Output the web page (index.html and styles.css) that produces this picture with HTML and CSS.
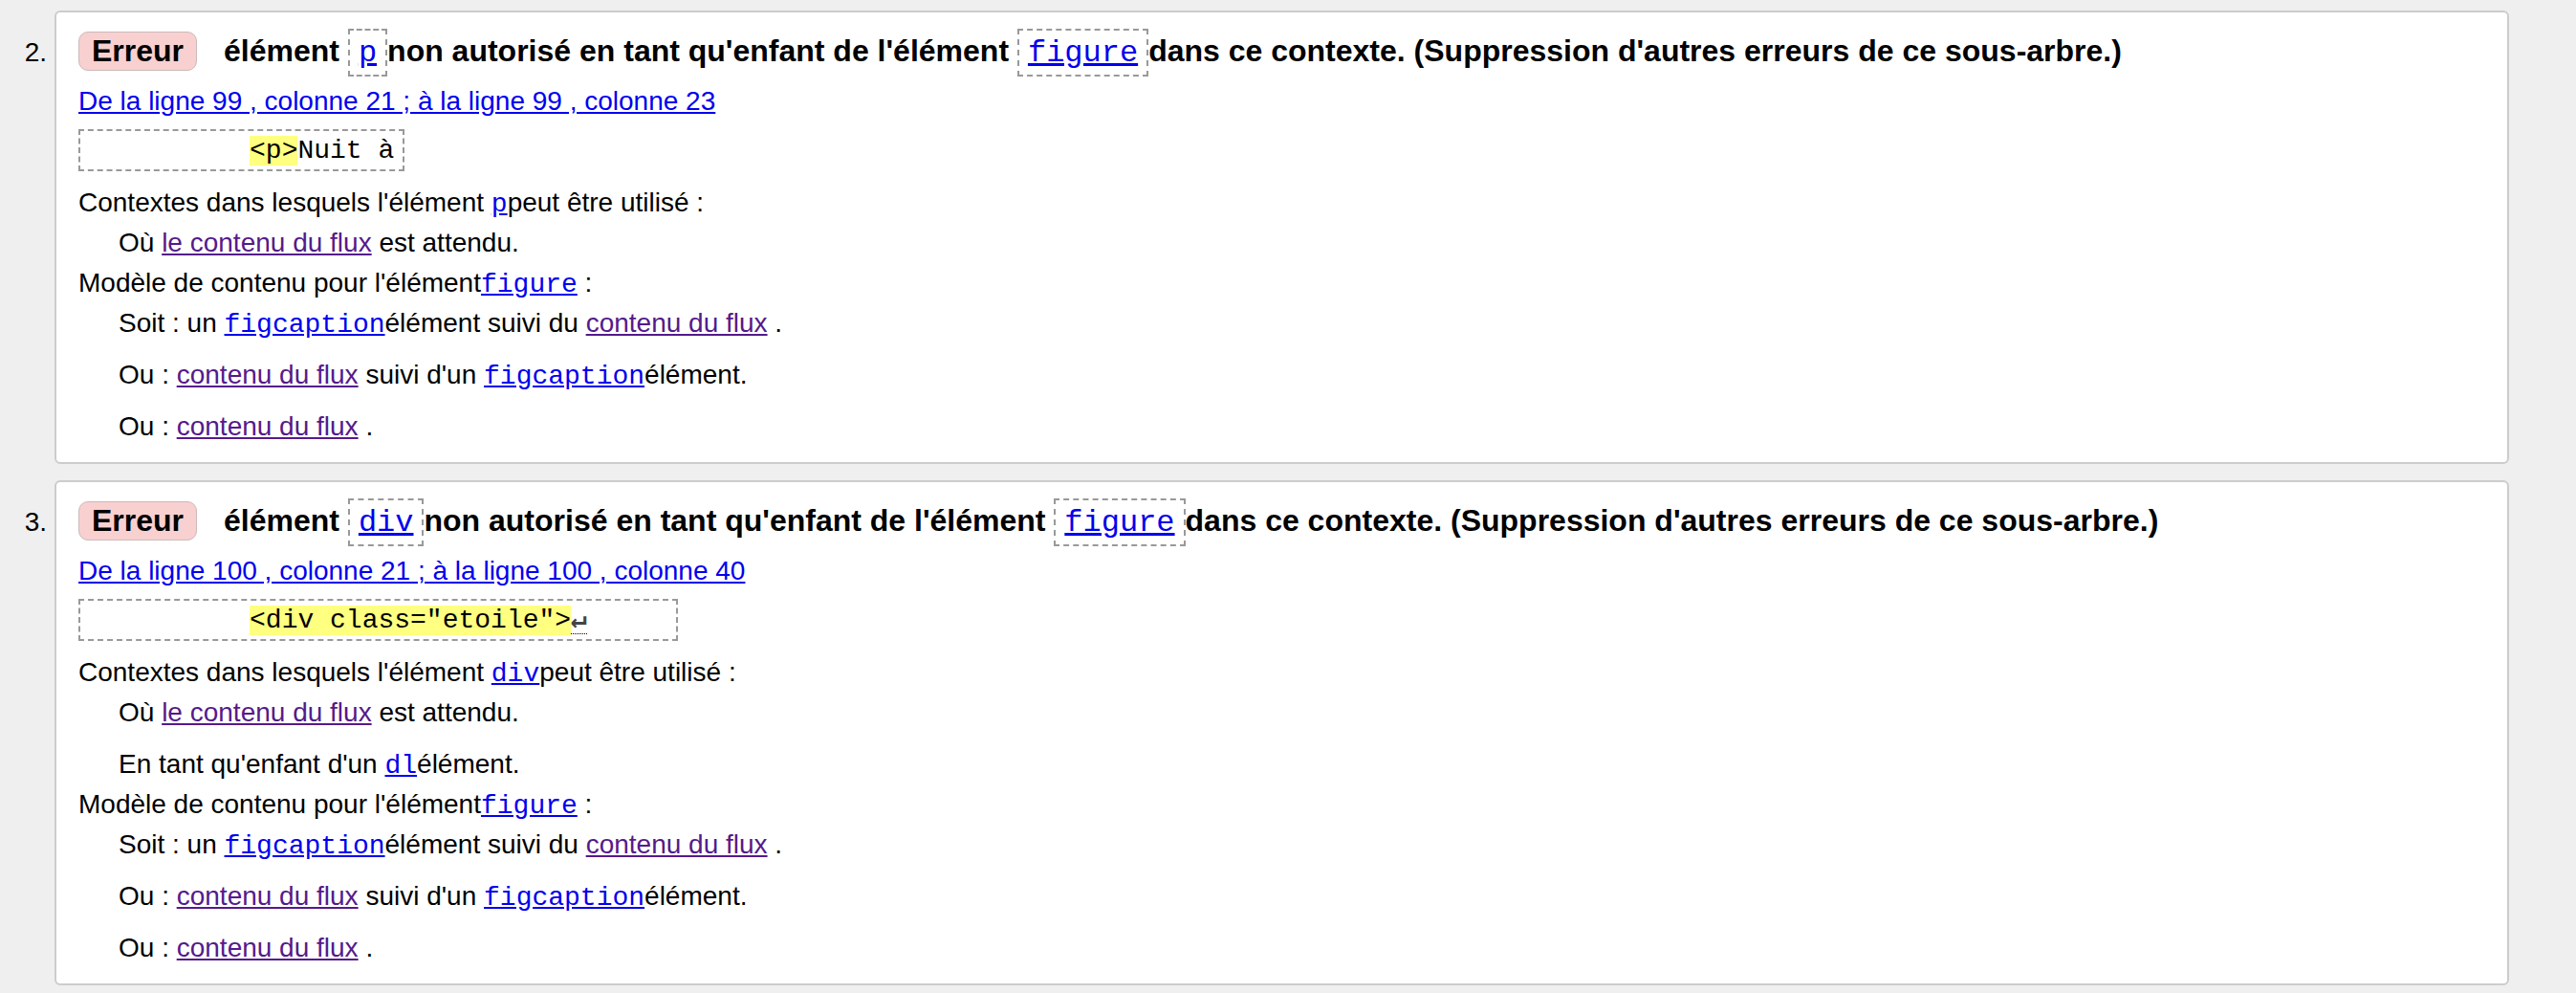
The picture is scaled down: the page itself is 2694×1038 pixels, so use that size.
FILE: index.html
```html
<!DOCTYPE html>
<html lang="fr">
<head>
<meta charset="utf-8">
<title>Résultats de validation</title>
<link rel="stylesheet" href="styles.css">
</head>
<body>
<ol class="messages">
  <li class="msg">
    <span class="num">2.</span>
    <div class="card">
      <p class="title"><strong class="badge">Erreur</strong>élément <code class="tag"><a href="#">p</a></code>non autorisé en tant qu'enfant de l'élément <code class="tag"><a href="#">figure</a></code>dans ce contexte. (Suppression d'autres erreurs de ce sous-arbre.)</p>
      <p class="loc"><a href="#">De la ligne 99 , colonne 21 ; à la ligne 99 , colonne 23</a></p>
      <p class="extract"><code>          <b class="hl">&lt;p&gt;</b>Nuit à</code></p>
      <dl class="ctx">
        <dt>Contextes dans lesquels l'élément <a href="#"><code>p</code></a>peut être utilisé :</dt>
        <dd>Où <a class="v" href="#">le contenu du flux</a> est attendu.</dd>
        <dt>Modèle de contenu pour l'élément<a href="#"><code>figure</code></a> :</dt>
        <dd>Soit : un <a href="#"><code>figcaption</code></a>élément suivi du <a class="v" href="#">contenu du flux</a> .</dd>
        <dd>Ou : <a class="v" href="#">contenu du flux</a> suivi d'un <a href="#"><code>figcaption</code></a>élément.</dd>
        <dd>Ou : <a class="v" href="#">contenu du flux</a> .</dd>
      </dl>
    </div>
  </li>
  <li class="msg">
    <span class="num">3.</span>
    <div class="card">
      <p class="title"><strong class="badge">Erreur</strong>élément <code class="tag"><a href="#">div</a></code>non autorisé en tant qu'enfant de l'élément <code class="tag"><a href="#">figure</a></code>dans ce contexte. (Suppression d'autres erreurs de ce sous-arbre.)</p>
      <p class="loc"><a href="#">De la ligne 100 , colonne 21 ; à la ligne 100 , colonne 40</a></p>
      <p class="extract"><code>          <b class="hl">&lt;div class="etoile"&gt;</b><b class="lf" title="Saut de ligne">↵</b>     </code></p>
      <dl class="ctx">
        <dt>Contextes dans lesquels l'élément <a href="#"><code>div</code></a>peut être utilisé :</dt>
        <dd>Où <a class="v" href="#">le contenu du flux</a> est attendu.</dd>
        <dd>En tant qu'enfant d'un <a href="#"><code>dl</code></a>élément.</dd>
        <dt>Modèle de contenu pour l'élément<a href="#"><code>figure</code></a> :</dt>
        <dd>Soit : un <a href="#"><code>figcaption</code></a>élément suivi du <a class="v" href="#">contenu du flux</a> .</dd>
        <dd>Ou : <a class="v" href="#">contenu du flux</a> suivi d'un <a href="#"><code>figcaption</code></a>élément.</dd>
        <dd>Ou : <a class="v" href="#">contenu du flux</a> .</dd>
      </dl>
    </div>
  </li>
</ol>
</body>
</html>
```

FILE: styles.css
```css
html, body {
  margin: 0;
}

body {
  background: #efefef;
  color: #000;
  font-family: "Liberation Sans", Arial, sans-serif;
  font-size: 28px;
  padding-top: 11px;
}

code {
  font-family: "Liberation Mono", "Courier New", monospace;
  font-size: inherit;
  line-height: 1;
}

a {
  color: #0000ee;
}

a.v {
  color: #551a8b;
}

.messages {
  list-style: none;
  margin: 0;
  padding: 0 70px 0 0;
}

.msg {
  display: flex;
  align-items: baseline;
  margin-bottom: 17px;
}

.num {
  flex: 0 0 57px;
  box-sizing: border-box;
  text-align: right;
  padding-right: 8px;
}

.card {
  flex: 1;
  min-width: 0;
  background: #fff;
  border: 2px solid #cccccc;
  border-radius: 6px;
  padding: 20px 23px 16px;
}

.title {
  margin: 0;
  font-size: 32px;
  font-weight: bold;
  white-space: nowrap;
}

.badge {
  display: inline-block;
  background: #f8d0d0;
  border: 1px solid #cdb9b9;
  border-radius: 10px;
  padding: 1px 13px;
  margin-right: 28px;
}

.tag {
  font-weight: normal;
  border: 2px dashed #999;
  padding: 5px 9px 4px;
}

.loc {
  margin: 11px 0 0;
  line-height: 42px;
}

.extract {
  margin: 8px 0 0;
  width: fit-content;
  border: 2px dashed #999;
  padding: 3px 9px;
  line-height: 32px;
  white-space: pre;
}

.extract code {
  line-height: 32px;
}

.hl {
  background: #ffff80;
  font-weight: normal;
}

.lf {
  display: inline-block;
  width: 0.6em;
  line-height: 30px;
  font-weight: bold;
  font-family: "DejaVu Sans Mono", monospace;
  color: #444;
  border-bottom: 1px dotted #000;
}

.ctx {
  margin: 12px 0 0;
  line-height: 42px;
}

.ctx dd {
  margin: 0 0 0 42px;
}

.ctx dd + dd {
  margin-top: 12px;
}
```
